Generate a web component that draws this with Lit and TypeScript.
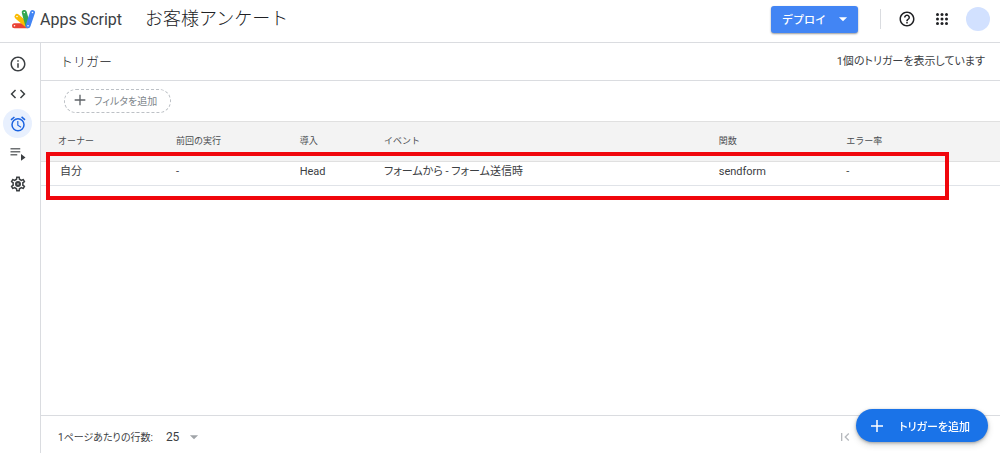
import { LitElement, html, css, svg } from "lit";
import { customElement, property, state } from "lit/decorators.js";
import { classMap } from "lit/directives/class-map.js";

const GEAR =
  "M19.43 12.98c.04-.32.07-.64.07-.98 0-.34-.03-.66-.07-.98l2.11-1.65c.19-.15.24-.42.12-.64l-2-3.46c-.09-.16-.26-.25-.44-.25-.06 0-.12.01-.17.03l-2.49 1c-.52-.4-1.08-.73-1.69-.98l-.38-2.65C14.46 2.18 14.25 2 14 2h-4c-.25 0-.46.18-.49.42l-.38 2.65c-.61.25-1.17.59-1.69.98l-2.49-1c-.06-.02-.12-.03-.18-.03-.17 0-.34.09-.43.25l-2 3.46c-.13.22-.07.49.12.64l2.11 1.65c-.04.32-.07.65-.07.98 0 .33.03.66.07.98l-2.11 1.65c-.19.15-.24.42-.12.64l2 3.46c.09.16.26.25.44.25.06 0 .12-.01.17-.03l2.49-1c.52.4 1.08.73 1.69.98l.38 2.65c.03.24.24.42.49.42h4c.25 0 .46-.18.49-.42l.38-2.65c.61-.25 1.17-.59 1.69-.98l2.49 1c.06.02.12.03.18.03.17 0 .34-.09.43-.25l2-3.46c.12-.22.07-.49-.12-.64l-2.11-1.65zm-1.98-1.71c.04.31.05.52.05.73 0 .21-.02.43-.05.73l-.14 1.13.89.7 1.08.84-.7 1.21-1.27-.51-1.04-.42-.9.68c-.43.32-.84.56-1.25.73l-1.06.43-.16 1.13-.2 1.35h-1.4l-.19-1.35-.16-1.13-1.06-.43c-.43-.18-.83-.41-1.23-.71l-.91-.7-1.06.43-1.27.51-.7-1.21 1.08-.84.89-.7-.14-1.13c-.03-.31-.05-.54-.05-.74s.02-.43.05-.73l.14-1.13-.89-.7-1.08-.84.7-1.21 1.27.51 1.04.42.9-.68c.43-.32.84-.56 1.25-.73l1.06-.43.16-1.13.2-1.35h1.39l.19 1.35.16 1.13 1.06.43c.43.18.83.41 1.23.71l.91.7 1.06-.43 1.27-.51.7 1.21-1.07.85-.89.7.14 1.13z";

const DOTS = [6, 12, 18];

const ICONS: Record<string, unknown> = {
  info: svg`<path d="M11 7h2v2h-2zm0 4h2v6h-2zm1-9C6.480 2 2 6.480 2 12s4.480 10 10 10 10-4.480 10-10S17.520 2 12 2zm0 18c-4.410 0-8-3.590-8-8s3.590-8 8-8 8 3.590 8 8-3.590 8-8 8z"/>`,
  code: svg`<path d="M9.400 16.600 4.800 12l4.600-4.600L8 6l-6 6 6 6 1.400-1.400zm5.200 0 4.600-4.600-4.600-4.600L16 6l6 6-6 6-1.400-1.400z"/>`,
  alarm: svg`<path d="m22 5.700-4.600-3.900-1.300 1.500 4.600 3.900zM7.900 3.400 6.600 1.900 2 5.700l1.300 1.500zM12.500 8H11v6l4.700 2.900.8-1.200-4-2.400zM12 4a9 9 0 1 0 0 18 9 9 0 0 0 0-18zm0 16a7 7 0 1 1 0-14 7 7 0 0 1 0 14z"/>`,
  runs: svg`<g opacity=".75"><path d="M2 4h13v2H2zm0 4h13v2H2zm0 4h9v2H2z"/></g><path d="M16 12v9l6-4.500z"/>`,
  gear: svg`<path d=${GEAR}/><path fill-rule="evenodd" d="M12 8a4 4 0 1 0 0 8 4 4 0 0 0 0-8zm0 3a1 1 0 1 1 0 2 1 1 0 0 1 0-2z"/>`,
  help: svg`<path d="M11 18h2v-2h-2v2zm1-16C6.480 2 2 6.480 2 12s4.480 10 10 10 10-4.480 10-10S17.520 2 12 2zm0 18c-4.410 0-8-3.590-8-8s3.590-8 8-8 8 3.590 8 8-3.590 8-8 8zm0-14c-2.210 0-4 1.790-4 4h2c0-1.100.9-2 2-2s2 .9 2 2c0 2-3 1.750-3 5h2c0-2.250 3-2.500 3-5 0-2.210-1.790-4-4-4z"/>`,
  apps: DOTS.map((y) => DOTS.map((x) => svg`<circle cx=${x} cy=${y} r="2"/>`)),
  plus: svg`<path d="M20 13h-7v7h-2v-7H4v-2h7V4h2v7h7z"/>`,
  down: svg`<path d="m5 9 7 7 7-7z"/>`,
  first: svg`<path d="M18.400 16.600 13.800 12l4.600-4.600L17 6l-6 6 6 6zM6 6h2v12H6z"/>`,
};

@customElement("ui-icon")
class UiIcon extends LitElement {
  static styles = css`
    :host { display: block; width: 18px; height: 18px; flex: none; }
    .glyph { display: block; width: 100%; height: 100%; fill: currentColor; }
  `;
  @property() name = "";
  render() {
    return html`<svg class="glyph" viewBox="0 0 24 24" aria-hidden="true">${ICONS[this.name]}</svg>`;
  }
}

@customElement("app-root")
class AppRoot extends LitElement {
  static styles = css`
    :host {
      display: grid;
      grid-template-rows: 43px 1fr;
      height: 100vh;
      background: #fff;
      color: #3c4043;
      font-family: Roboto, "Noto Sans CJK JP", sans-serif;
      font-weight: 300;
      font-size: 10px;
    }
    * { box-sizing: border-box; }
    button, select { font: inherit; color: inherit; background: none; border: 0; margin: 0; padding: 0; cursor: pointer; }
    .top { display: flex; align-items: center; padding: 0 10px 4px 11px; border-bottom: 1px solid #dadce0; }
    .brand { display: flex; align-items: center; gap: 4px; color: #3c4043; text-decoration: none; font-size: 16px; font-weight: 400; }
    .logo { width: 25px; height: 20px; }
    .project { margin: 0 auto 0 23px; font-size: 18px; line-height: 24px; font-weight: 300; color: #202124; }
    .deploy { display: flex; align-items: center; gap: 10px; height: 27px; padding: 0 8px 0 11px; border-radius: 3px; background: #4285f4; color: #fff; font-size: 11px; font-weight: 500; box-shadow: 0 1px 2px rgba(0, 0, 0, 0.4); }
    .deploy ui-icon { width: 14px; height: 14px; }
    .rule { width: 1px; height: 20px; margin: 0 17px 0 22px; background: #dadce0; }
    .tools { display: flex; align-items: center; gap: 17px; color: #202124; }
    .tools .avatar { margin-left: -2px; }
    .avatar { width: 24px; height: 24px; border-radius: 50%; background: #d2e1ff; }
    .body { display: grid; grid-template-columns: 41px 1fr; min-height: 0; }
    .side { display: flex; flex-direction: column; align-items: center; gap: 1px; padding: 6px 5px 0 0; border-right: 1px solid #dadce0; }
    .nav { display: grid; place-items: center; width: 29px; height: 29px; border-radius: 50%; color: #3c4043; }
    .active { background: #e8f0fe; color: #1a62e0; }
    .main { position: relative; display: flex; flex-direction: column; min-width: 0; }
    .title { display: flex; align-items: center; justify-content: space-between; height: 38px; padding: 0 15px 3px 19px; border-bottom: 1px solid #dadce0; font-size: 11px; }
    .heading { margin: 0; font-size: 13px; font-weight: 300; color: #202124; }
    .count { font-feature-settings: "palt"; font-weight: 400; }
    .filters { padding: 8px 23px; height: 40px; }
    .chip { display: flex; align-items: center; gap: 6px; height: 24px; padding: 0 13px 2px 7px; border: 1px dashed #bdc1c6; border-radius: 12px; color: #80868b; font-weight: 400; font-feature-settings: "palt"; }
    .chip ui-icon { width: 16px; height: 16px; color: #5f6368; }
    .zone { position: relative; }
    .table { width: 100%; border-collapse: collapse; table-layout: fixed; }
    .table th { height: 40px; padding: 0 0 2px 17px; background: #f3f3f3; border-top: 1px solid #e0e0e0; border-bottom: 1px solid #e0e0e0; font-size: 9px; font-weight: 400; text-align: left; color: #4a4d51; }
    .table td { height: 24px; padding: 0 0 3px 17px; border-bottom: 1px solid #e0e3e8; font-size: 11px; line-height: 14px; font-weight: 400; white-space: nowrap; }
    .table td:first-child { padding-left: 19px; }
    .table td:lang(ja) { font-feature-settings: "palt"; }
    .c1 { width: 12.3%; } .c2 { width: 12.9%; } .c3 { width: 8.8%; } .c4 { width: 34.9%; } .c5 { width: 13.3%; }
    .mark { position: absolute; left: 5px; right: 51px; top: 31px; height: 48px; border: 4px solid #f0060c; pointer-events: none; }
    .foot { display: flex; align-items: center; margin-top: auto; height: 38px; padding: 4px 147px 0 17px; border-top: 1px solid #dadce0; font-weight: 400; }
    .foot label { font-feature-settings: "palt"; }
    .rows { display: flex; align-items: center; }
    .pick { display: flex; align-items: center; }
    .size { appearance: none; margin-left: 13px; width: 35px; margin-right: -14px; padding-right: 14px; font-size: 12px; }
    .pick ui-icon { width: 14px; height: 14px; color: #a0a4a8; pointer-events: none; }
    .pager { margin-left: auto; color: #b6b9bd; }
    .pager ui-icon { width: 16px; height: 16px; }
    .fab { position: fixed; right: 12px; bottom: 11px; display: flex; align-items: center; gap: 13px; height: 33px; padding: 0 18px 0 12px; border-radius: 17px; background: #1a73e8; color: #fff; font-size: 11px; font-weight: 400; box-shadow: 0 1px 3px rgba(60, 64, 67, 0.4), 0 3px 6px rgba(60, 64, 67, 0.2); }
    .fab .label { font-feature-settings: "palt"; font-weight: 500; }
  `;

  @state() private page = "alarm";

  private nav = [
    ["info", "概要"],
    ["code", "エディタ"],
    ["alarm", "トリガー"],
    ["runs", "実行数"],
    ["gear", "設定"],
  ];

  render() {
    return html`
      <header class="top">
        <a class="brand" href="#">
          <svg class="logo" viewBox="0 0 25 20" aria-hidden="true" fill="none" stroke-linecap="round" stroke-width="5">
            <path stroke="#ea4335" d="M3.500 16.800H16"/>
            <path stroke="#fbbc04" d="m6 7.500 10 8.500"/>
            <path stroke="#34a853" d="m13.300 3.500 3.400 12.500"/>
            <path stroke="#4285f4" d="m21.500 3.500-4.500 13.300"/>
            <g fill="#fff"><circle cx="3.500" cy="16.800" r=".8"/><circle cx="6" cy="7.500" r=".8"/><circle cx="13.300" cy="3.500" r=".8"/><circle cx="21.500" cy="3.500" r=".8"/><circle cx="17" cy="16.800" r=".8"/></g>
          </svg>
          <span>Apps Script</span>
        </a>
        <h1 class="project">お客様アンケート</h1>
        <button class="deploy">デプロイ<ui-icon name="down"></ui-icon></button>
        <span class="rule"></span>
        <div class="tools">
          <button aria-label="ヘルプ"><ui-icon name="help"></ui-icon></button>
          <button aria-label="アプリ"><ui-icon name="apps"></ui-icon></button>
          <button class="avatar" aria-label="アカウント"></button>
        </div>
      </header>
      <div class="body">
        <nav class="side">
          ${this.nav.map(
            ([id, label]) => html`<button
              class=${classMap({ nav: true, active: id === this.page })}
              aria-label=${label}
              @click=${() => (this.page = id)}
            ><ui-icon name=${id}></ui-icon></button>`
          )}
        </nav>
        <main class="main">
          <div class="title">
            <h2 class="heading">トリガー</h2>
            <span class="count">1個のトリガーを表示しています</span>
          </div>
          <div class="filters">
            <button class="chip"><ui-icon name="plus"></ui-icon>フィルタを追加</button>
          </div>
          <div class="zone">
            <table class="table">
              <thead>
                <tr>
                  <th class="c1">オーナー</th><th class="c2">前回の実行</th><th class="c3">導入</th>
                  <th class="c4">イベント</th><th class="c5">関数</th><th>エラー率</th>
                </tr>
              </thead>
              <tbody>
                <tr>
                  <td lang="ja">自分</td><td>-</td><td>Head</td>
                  <td lang="ja">フォームから - フォーム送信時</td><td>sendform</td><td>-</td>
                </tr>
              </tbody>
            </table>
            <div class="mark"></div>
          </div>
          <footer class="foot">
            <div class="rows">
              <label for="size">1ページあたりの行数:</label>
              <span class="pick">
                <select id="size" class="size"><option>25</option><option>50</option></select>
                <ui-icon name="down"></ui-icon>
              </span>
            </div>
            <button class="pager" aria-label="最初のページ"><ui-icon name="first"></ui-icon></button>
          </footer>
        </main>
      </div>
      <button class="fab"><ui-icon name="plus"></ui-icon><span class="label">トリガーを追加</span></button>
    `;
  }
}
